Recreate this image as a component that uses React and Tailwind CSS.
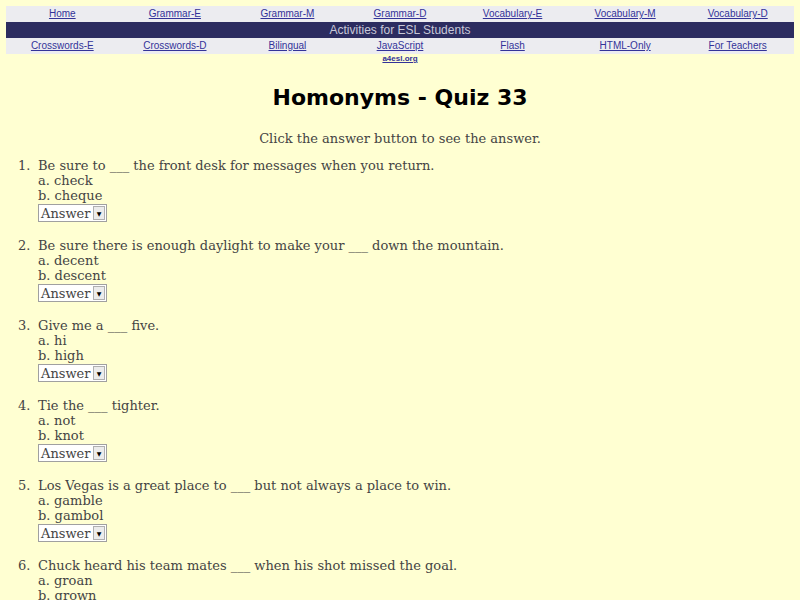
import React from 'react'

const topLinks = ['Home', 'Grammar-E', 'Grammar-M', 'Grammar-D', 'Vocabulary-E', 'Vocabulary-M', 'Vocabulary-D']
const bottomLinks = ['Crosswords-E', 'Crosswords-D', 'Bilingual', 'JavaScript', 'Flash', 'HTML-Only', 'For Teachers']

const questions = [
  ['Be sure to ___ the front desk for messages when you return.', 'check', 'cheque'],
  ['Be sure there is enough daylight to make your ___ down the mountain.', 'decent', 'descent'],
  ['Give me a ___ five.', 'hi', 'high'],
  ['Tie the ___ tighter.', 'not', 'knot'],
  ['Los Vegas is a great place to ___ but not always a place to win.', 'gamble', 'gambol'],
  ['Chuck heard his team mates ___ when his shot missed the goal.', 'groan', 'grown'],
]

const AnswerBox = () => (
  <div className="flex items-center w-[69px] h-[18px] bg-white border border-[#a0a0a0] mt-[1px]">
    <span className="flex-1 pl-[2px] text-[13px] leading-none text-[#444]">Answer</span>
    <span className="flex items-center justify-center w-[12px] h-[14px] mr-[1px] bg-[#ececec] border border-[#b0b0b0] text-[6px] text-black">▼</span>
  </div>
)

const NavRow = ({ links }) => (
  <div className="grid grid-cols-7 bg-[#ececf0] h-[16px] items-center">
    {links.map(l => (
      <a key={l} className="text-center text-[10px] leading-none text-[#333399] underline">{l}</a>
    ))}
  </div>
)

export default function App() {
  return (
    <div className="h-[600px] overflow-hidden bg-[#ffffd2] font-['DejaVu_Serif',serif] text-[#444]">
      <div className="px-[6px] pt-[6px] font-['Liberation_Sans',Arial,sans-serif]">
        <NavRow links={topLinks} />
        <div className="bg-[#2c2c60] h-[16px] flex items-center justify-center text-[12px] text-[#c8c8d8] leading-none">
          Activities for ESL Students
        </div>
        <NavRow links={bottomLinks} />
        <div className="grid grid-cols-7">
          <div className="col-start-4 text-center text-[8px] leading-none mt-[1px] text-[#333399] underline font-bold">a4esl.org</div>
        </div>
      </div>

      <h1 className="text-center mt-[20px] text-[22px] leading-[30px] font-bold text-black font-['DejaVu_Sans',sans-serif]">
        Homonyms - Quiz 33
      </h1>

      <p className="text-center mt-[18px] text-[13px] leading-[16px]">Click the answer button to see the answer.</p>

      <ol className="mt-[11px] pl-[38px] text-[13px] leading-[15px]">
        {questions.map(([q, a, b], i) => (
          <li key={i} className="relative mb-[16px]">
            <span className="absolute -left-[20px]">{i + 1}.</span>
            <div>{q}</div>
            <div>a. {a}</div>
            <div>b. {b}</div>
            <AnswerBox />
          </li>
        ))}
      </ol>
    </div>
  )
}
